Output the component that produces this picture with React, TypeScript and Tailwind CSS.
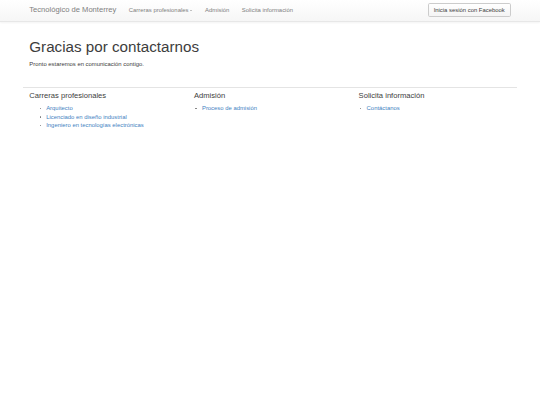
import React from "react";

const font = { fontFamily: '"Liberation Sans", Arial, sans-serif' };

const cols = [
  { t: "Carreras profesionales", pl: "pl-[16.9px]", items: ["Arquitecto", "Licenciado en diseño industrial", "Ingeniero en tecnologías electrónicas"] },
  { t: "Admisión", pl: "pl-[8px]", items: ["Proceso de admisión"] },
  { t: "Solicita información", pl: "pl-[8px]", items: ["Contáctanos"] },
];

export default function App() {
  return (
    <div className="min-h-[405px] w-[540px] bg-white text-[#3d3d3d] text-[5.9px] leading-[8.4px]" style={font}>
      <nav className="h-[21.5px] border-b-[0.5px] border-[#e7e7e7] bg-gradient-to-b from-white to-[#f6f6f6] shadow-[0_0.5px_2px_rgba(0,0,0,0.05)]">
        <div className="mx-auto flex h-full w-[494px] items-center px-[6.3px]">
          <span className="pr-[6.3px] text-[7.6px] text-[#808080]">Tecnológico de Monterrey</span>
          <span className="flex items-center px-[6.3px] text-[#808080]">
            Carreras profesionales
            <span className="ml-[2px] inline-block h-0 w-0 border-x-[1.7px] border-t-[1.7px] border-x-transparent border-t-[#888]" />
          </span>
          <span className="px-[6.3px] text-[#808080]">Admisión</span>
          <span className="px-[6.3px] text-[#808080]">Solicita información</span>
          <button className="ml-auto h-[14.3px] rounded-[1.7px] border-[0.5px] border-[#ccc] bg-gradient-to-b from-white to-[#f4f4f4] px-[5px] text-[5.9px] text-[#3d3d3d]">
            Inicia sesión con Facebook
          </button>
        </div>
      </nav>
      <div className="mx-auto mt-[17.4px] w-[494px] px-[6.3px]">
        <h1 className="mt-[8.4px] mb-[4.2px] text-[15.2px] font-normal leading-[16.7px]">Gracias por contactarnos</h1>
        <p className="mb-[4.2px]">Pronto estaremos en comunicación contigo.</p>
        <hr className="-mx-[6.3px] mt-[18.4px] mb-0 border-t-[0.5px] border-[#e4e4e4]" />
        <div className="-mx-[6.3px] flex">
          {cols.map((c) => (
            <div key={c.t} className="w-1/3 px-[6.3px]">
              <h4 className="mt-[4.2px] mb-[4.2px] text-[7.6px] font-normal leading-[8.4px]">{c.t}</h4>
              <ul className={c.pl}>
                {c.items.map((i) => (
                  <li key={i} className="-ml-[6.6px] flex items-center text-[#3f82bf]">
                    <span className="mr-[5.3px] inline-block h-[1.3px] w-[1.3px] shrink-0 rounded-full bg-[#777]" />
                    {i}
                  </li>
                ))}
              </ul>
            </div>
          ))}
        </div>
      </div>
    </div>
  );
}
